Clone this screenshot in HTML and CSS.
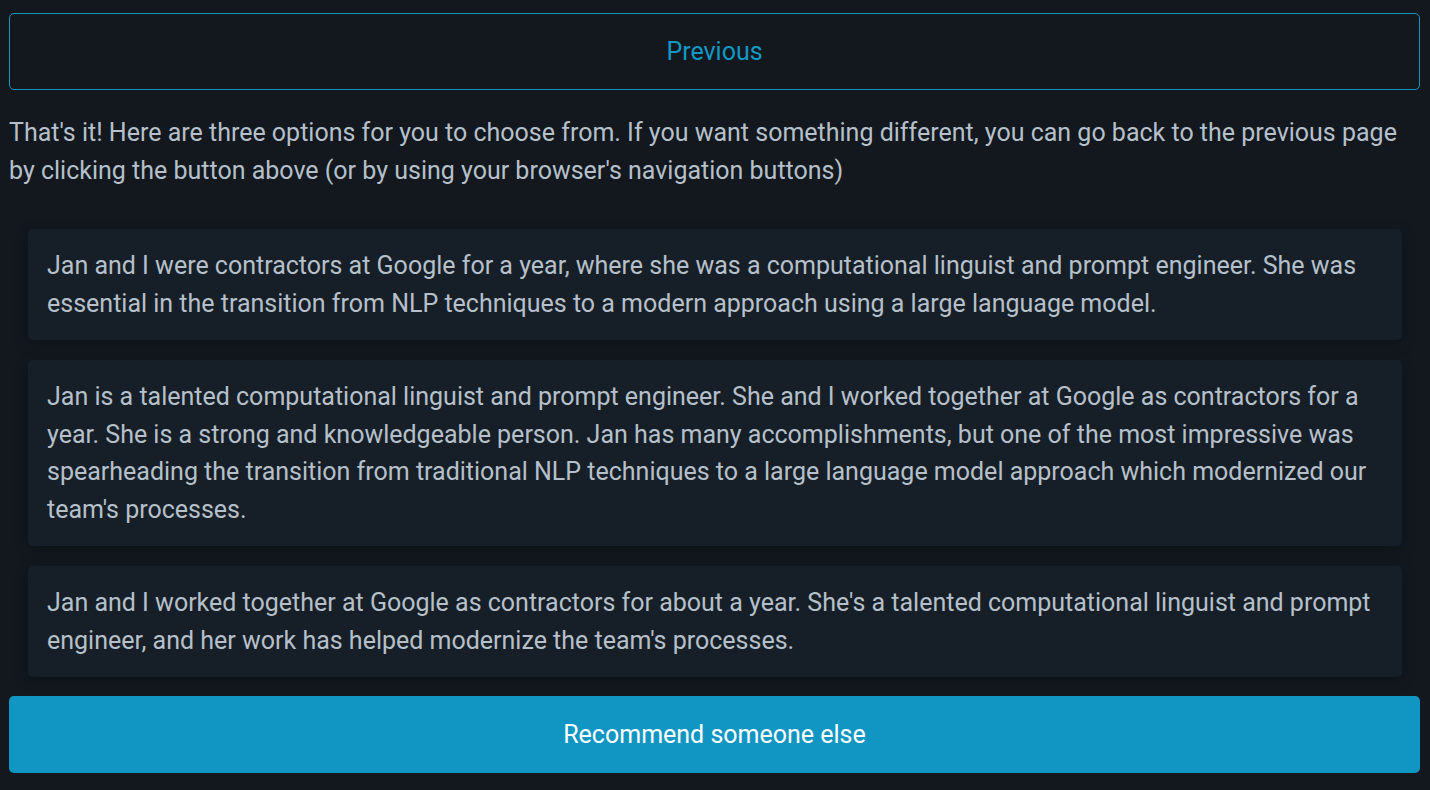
FILE: index.html
```html
<!DOCTYPE html>
<html lang="en">
<head>
<meta charset="utf-8">
<title>Recommendations</title>
<link rel="stylesheet" href="styles.css">
</head>
<body>
<main class="page">
  <button class="btn-outline" type="button">Previous</button>
  <p class="intro">That's it! Here are three options for you to choose from. If you want something different, you can go back to the previous page by clicking the button above (or by using your browser's navigation buttons)</p>
  <div class="options">
    <div class="card">Jan and I were contractors at Google for a year, where she was a computational linguist and prompt engineer. She was essential in the transition from NLP techniques to a modern approach using a large language model.</div>
    <div class="card">Jan is a talented computational linguist and prompt engineer. She and I worked together at Google as contractors for a year. She is a strong and knowledgeable person. Jan has many accomplishments, but one of the most impressive was spearheading the transition from traditional NLP techniques to a large language model approach which modernized our team's processes.</div>
    <div class="card">Jan and I worked together at Google as contractors for about a year. She's a talented computational linguist and prompt engineer, and her work has helped modernize the team's processes.</div>
  </div>
  <button class="btn-primary" type="button">Recommend someone else</button>
</main>
</body>
</html>
```

FILE: styles.css
```css
html, body {
  margin: 0;
  padding: 0;
  background: #12181e;
}
body {
  font-family: Roboto, "Liberation Sans", sans-serif;
  color: #b6c0ca;
  font-size: 25px;
}
.page {
  display: flex;
  flex-direction: column;
  padding: 13px 10px 18px 9px;
}
.btn-outline {
  height: 77px;
  background: transparent;
  border: 1px solid #1694c2;
  border-radius: 5px;
  color: #1398c6;
  font-family: inherit;
  font-size: 25px;
  cursor: pointer;
}
.intro {
  margin: 24px 0 39px 0;
  line-height: 38px;
}
.options {
  display: flex;
  flex-direction: column;
  gap: 20px;
  margin: 0 18px 0 19px;
}
.card {
  background: #161f27;
  border-radius: 5px;
  padding: 18px 19px;
  line-height: 37.5px;
  box-shadow: 0 4px 14px rgba(0, 0, 0, 0.25);
}
.btn-primary {
  margin-top: 19px;
  height: 77px;
  background: #1196c3;
  border: none;
  border-radius: 5px;
  color: #ffffff;
  font-family: inherit;
  font-size: 25px;
  cursor: pointer;
}
```
